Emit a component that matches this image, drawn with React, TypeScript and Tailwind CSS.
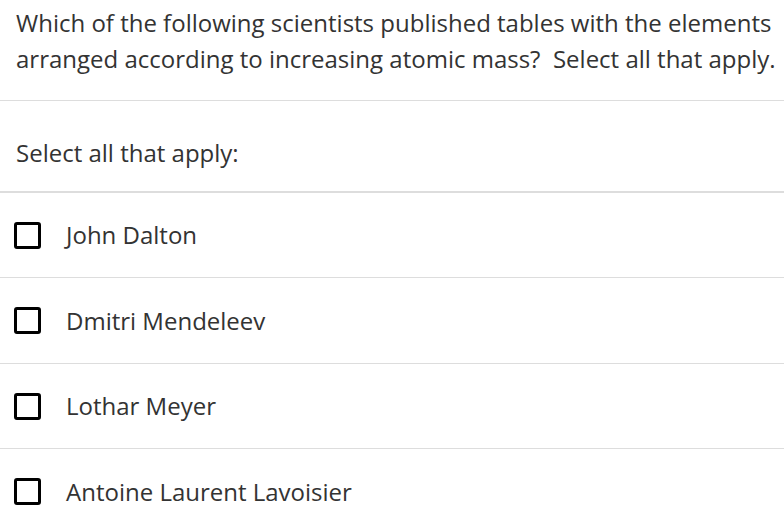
const options = ["John Dalton", "Dmitri Mendeleev", "Lothar Meyer", "Antoine Laurent Lavoisier"]

export default function App() {
  return (
    <div className="min-h-screen bg-white text-[#333] font-['Open_Sans',sans-serif]">
      {/* Question */}
      <div className="pl-4 pt-[5px] pb-[23px] text-[24px] leading-[36px] whitespace-nowrap border-b border-[#ddd]">
        Which of the following scientists published tables with the elements
        <br />
        arranged according to increasing atomic mass?&nbsp; Select all that apply.
      </div>

      <div className="px-4 pt-[13px] h-[92px] flex items-center text-[24px] border-b-2 border-[#ddd]">
        Select all that apply:
      </div>

      {options.map((opt, i) => (
        <label
          key={opt}
          className={`flex items-center px-[14px] text-[24px] ${i === 1 ? "h-[86px]" : "h-[85px]"} ${i < options.length - 1 ? "border-b border-[#ddd]" : ""}`}
        >
          <span className="w-[27px] h-[27px] border-[3px] border-black rounded-[3px] shrink-0" />
          <span className="ml-[25px]">{opt}</span>
        </label>
      ))}
    </div>
  )
}
